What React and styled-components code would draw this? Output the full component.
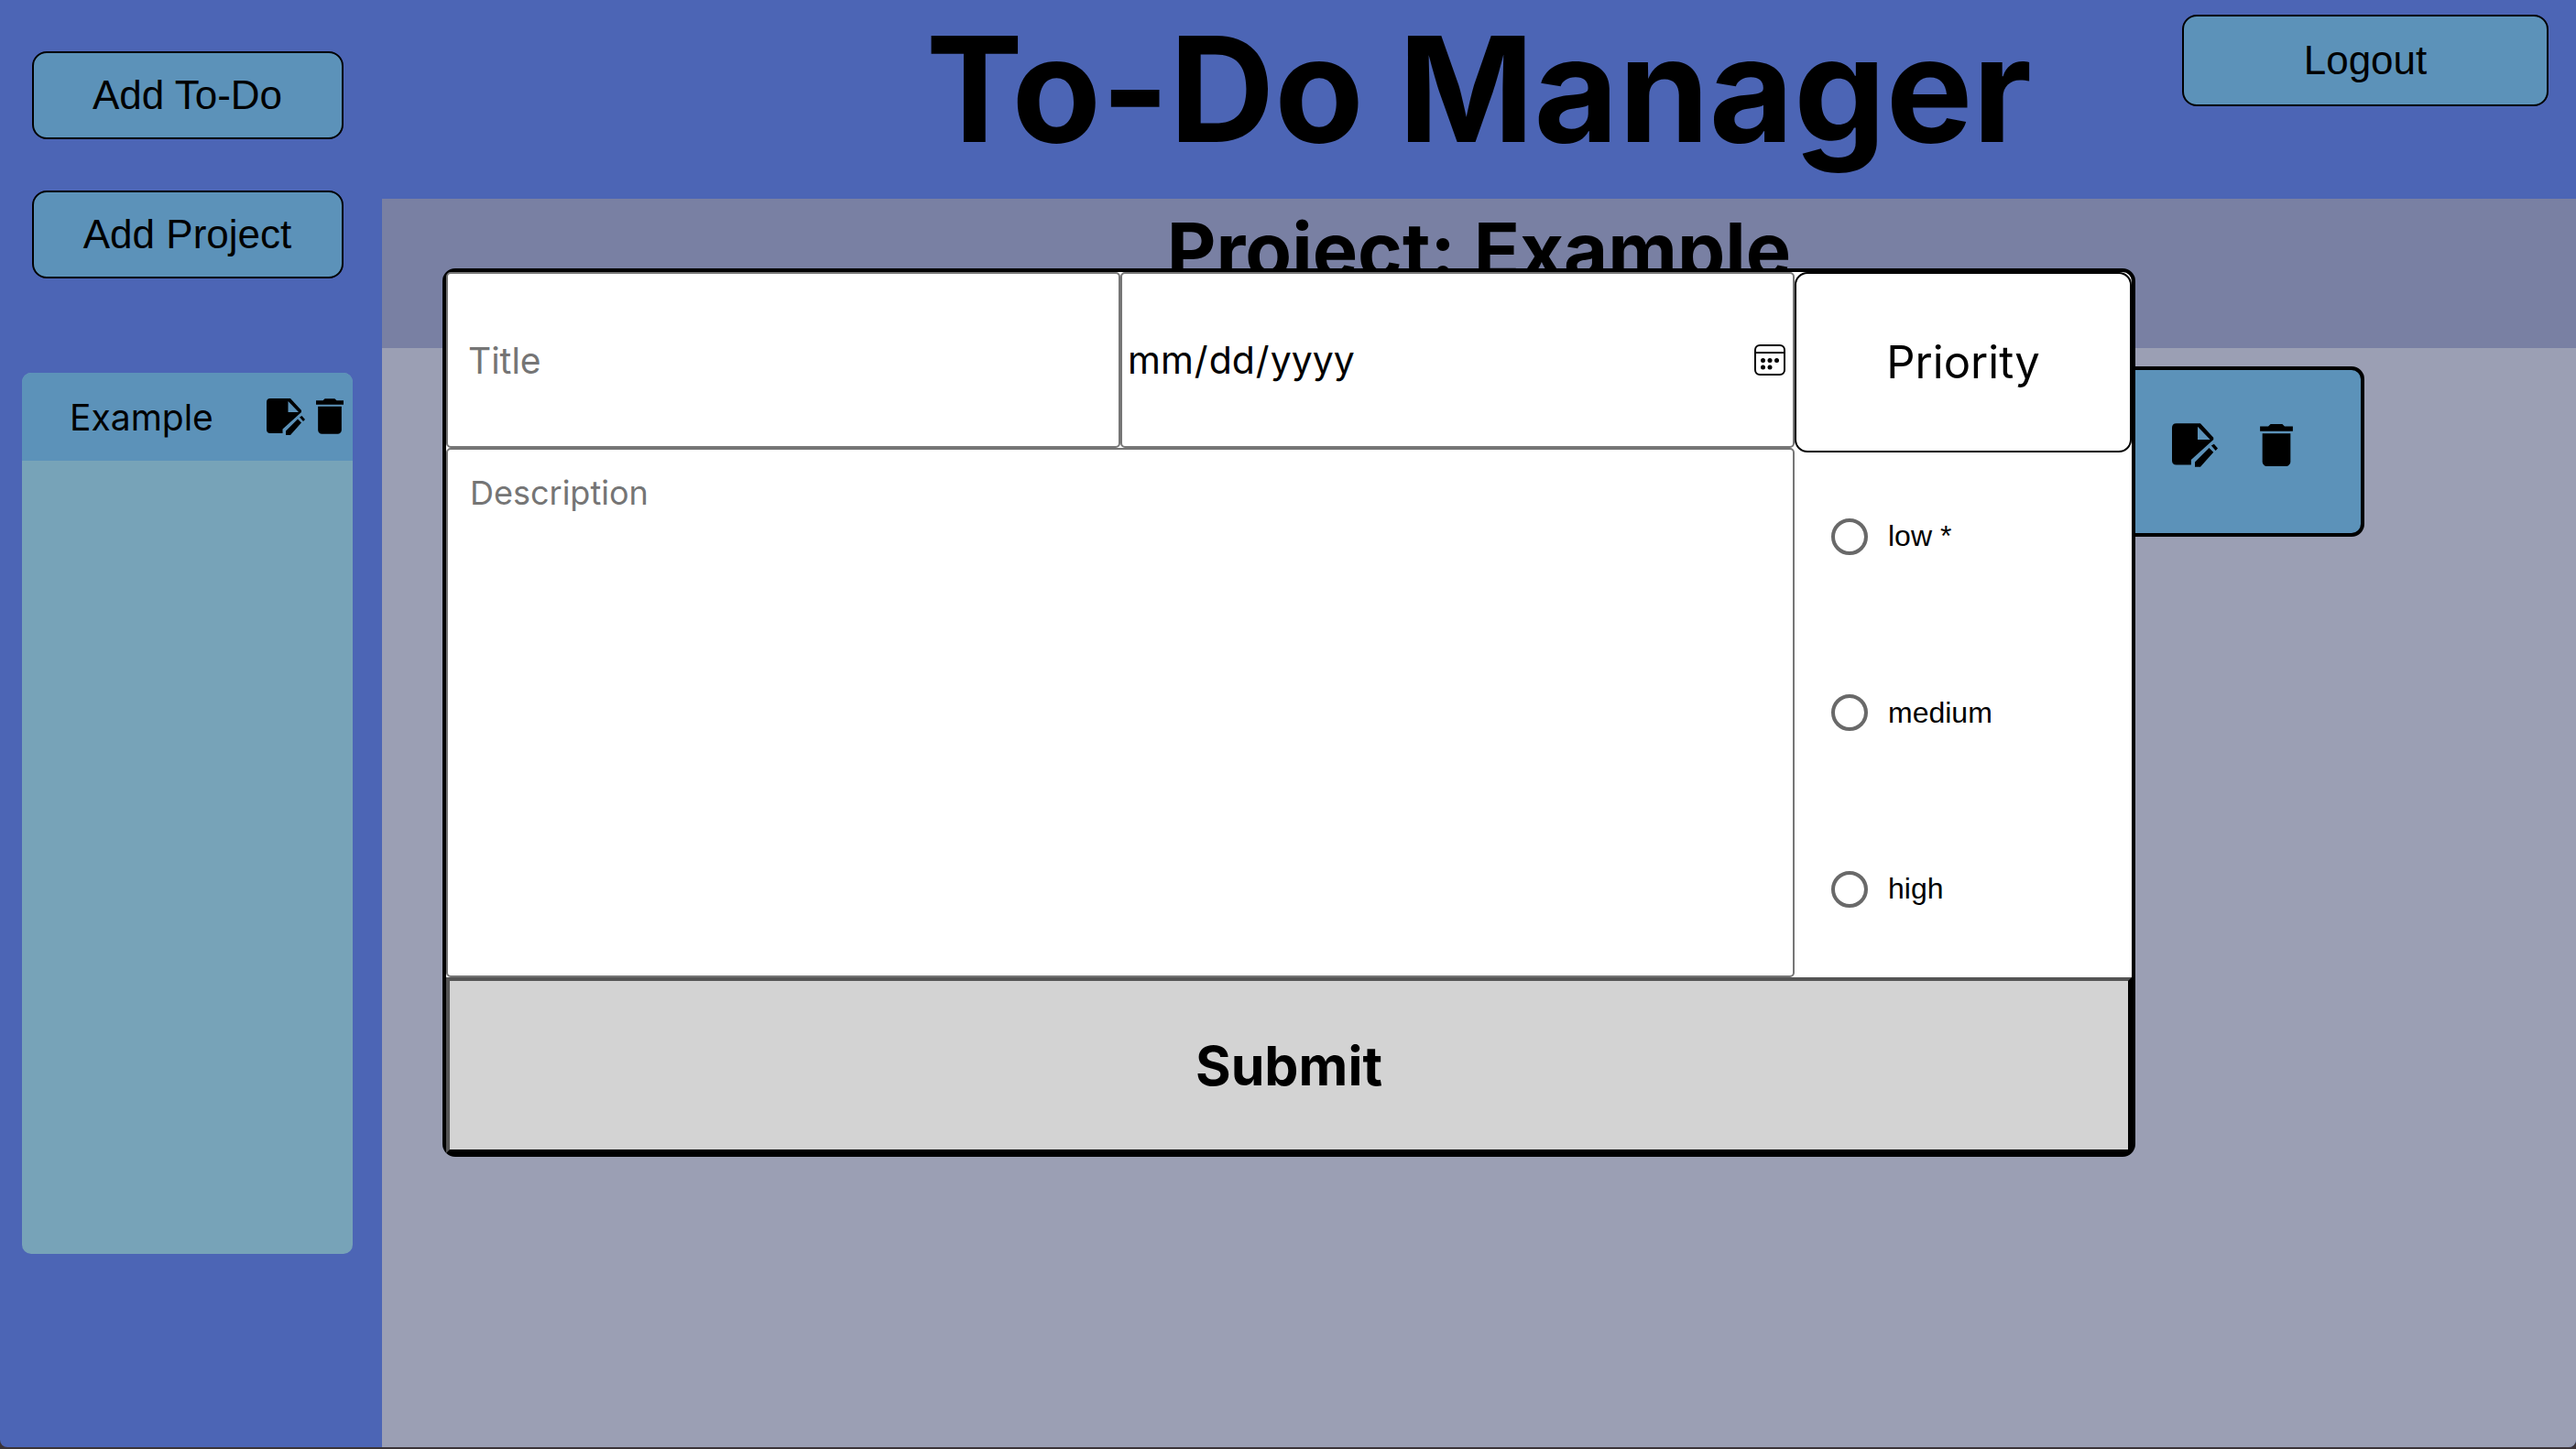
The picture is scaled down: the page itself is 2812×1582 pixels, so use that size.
import React from "react";
import styled, { createGlobalStyle } from "styled-components";

const sans = `Inter, "Open Sans", "Liberation Sans", sans-serif`;
const arial = `"Liberation Sans", Arial, sans-serif`;

const GlobalStyle = createGlobalStyle`
  *, *::before, *::after { box-sizing: border-box; }
  body { margin: 0; background: #3a3337; font-family: ${sans}; color: #000; }
  h1, h2, ul, fieldset { margin: 0; padding: 0; }
`;

const Page = styled.div`
  position: relative;
  display: grid;
  grid-template-columns: 417px 1fr;
  grid-template-rows: 217px 1fr;
  height: calc(100vh - 2px);
  background: #4c65b5;
  border-radius: 0 0 8px 8px;
  overflow: hidden;
`;

const Sidebar = styled.aside`
  grid-row: 1 / 3;
  display: flex;
  flex-direction: column;
  align-items: center;
  gap: 56px;
  padding: 56px 32px 0 24px;
`;

const Button = styled.button`
  width: ${(p) => p.$width}px;
  height: ${(p) => p.$height}px;
  padding: 0;
  border: 2px solid #000;
  border-radius: 16px;
  background: #5c92b9;
  color: #000;
  font: 44px ${arial};
`;

const ProjectList = styled.ul`
  align-self: stretch;
  height: 962px;
  margin-top: 47px;
  border-radius: 10px;
  background: #77a3b8;
  list-style: none;
  overflow: hidden;
`;

const ProjectRow = styled.li`
  display: flex;
  align-items: center;
  height: 96px;
  padding: 0 10px 0 52px;
  background: #5c92b9;
  font-size: 39px;
`;

const ProjectName = styled.span`
  flex: 1;
`;

const IconButton = styled.button`
  display: flex;
  padding: 0;
  border: 0;
  background: none;
  color: #000;
`;

const RowIcons = styled.div`
  display: flex;
  gap: 12px;
`;

const Header = styled.header`
  display: grid;
  grid-template-columns: 1fr;
`;

const Title = styled.h1`
  grid-area: 1 / 1;
  text-align: center;
  font-size: 159px;
  line-height: 194px;
`;

const Account = styled.div`
  grid-area: 1 / 1;
  justify-self: end;
  padding: 16px 30px 0 0;
`;

const Main = styled.main`
  background: #9b9fb4;
`;

const ProjectTitle = styled.h2`
  height: 163px;
  background: #7980a3;
  text-align: center;
  font-size: 83px;
  line-height: 112px;
`;

const TodoCard = styled.article`
  display: flex;
  align-items: center;
  justify-content: flex-end;
  gap: 46px;
  height: 186px;
  margin: 20px 231px 0;
  padding: 0 74px 14px 0;
  border: 4px solid #000;
  border-radius: 14px;
  background: #5c92b9;
`;

const Overlay = styled.div`
  position: absolute;
  inset: 0;
  padding: 293px 481px 0 483px;
`;

const TodoForm = styled.form`
  display: grid;
  grid-template-columns: 2fr 2fr 1fr;
  grid-template-rows: 192px 578px 192px;
  border: 4px solid #000;
  border-radius: 14px;
  background: #fff;
`;

const Field = styled.input`
  min-width: 0;
  width: 100%;
  height: 100%;
  border: 2px solid #767676;
  border-radius: 5px;
  background: #fff;
  padding: 0 22px;
  color: #000;
  font: 39px ${sans};
  &::placeholder { color: #757575; opacity: 1; }
`;

const DateBox = styled.div`
  display: grid;
  align-items: center;
`;

const DateField = styled(Field)`
  grid-area: 1 / 1;
  padding: 0 5px;
  font-size: 41px;
  &::-webkit-calendar-picker-indicator { opacity: 0; }
`;

const CalendarIcon = styled.svg`
  grid-area: 1 / 1;
  justify-self: end;
  margin-right: 10px;
  pointer-events: none;
`;

const Description = styled.textarea`
  grid-column: 1 / 3;
  border: 2px solid #767676;
  border-radius: 5px;
  background: #fff;
  padding: 25px 24px;
  resize: none;
  font: 36px ${sans};
  &::placeholder { color: #757575; opacity: 1; }
`;

const PriorityGroup = styled.fieldset`
  grid-area: 1 / 3 / 3 / 4;
  display: grid;
  grid-template-rows: repeat(4, 1fr);
  min-width: 0;
  border: 0;
`;

const PriorityHeading = styled.div`
  display: flex;
  align-items: center;
  justify-content: center;
  margin-bottom: -4px;
  border: 2px solid #000;
  border-radius: 14px;
  font-size: 49px;
`;

const Option = styled.label`
  display: flex;
  align-items: center;
  gap: 22px;
  padding-left: 40px;
  font: 32px ${arial};
`;

const Radio = styled.input`
  appearance: none;
  width: 40px;
  height: 40px;
  margin: 0;
  border: 4px solid #696969;
  border-radius: 50%;
  background: #fff;
  &:checked { background: #000; background-clip: content-box; padding: 6px; }
`;

const Submit = styled.button`
  grid-column: 1 / -1;
  border: 4px solid;
  border-color: #555 #000 #000 #555;
  background: #d3d3d3;
  color: #000;
  font: bold 59px ${sans};
`;

function EditIcon({ width }) {
  return (
    <svg width={width} height={Math.round((width * 20) / 21)} viewBox="0 0 42 40" fill="currentColor" aria-hidden="true">
      <path fillRule="evenodd" d="M4 0H26L38 13V15L17.500 33.500V38H4Q0 38 0 34V4Q0 0 4 0ZM23.500 3V15H35Z" />
      <path d="M21 35.500L34 22.500L38 26.500L26 40H21ZM36 20.500L38.500 19L42 23L40 25Z" />
    </svg>
  );
}

function TrashIcon({ width }) {
  return (
    <svg width={width} height={Math.round((width * 18) / 14)} viewBox="5 3 14 18" fill="currentColor" aria-hidden="true">
      <path d="M6 19c0 1.100.9 2 2 2h8c1.100 0 2-.9 2-2V7H6v12zM19 4h-3.500l-1-1h-5l-1 1H5v2h14V4z" />
    </svg>
  );
}

export default function App() {
  return (
    <>
      <GlobalStyle />
      <Page>
        <Sidebar>
          <Button $width={340} $height={96}>Add To-Do</Button>
          <Button $width={340} $height={96}>Add Project</Button>
          <ProjectList>
            <ProjectRow>
              <ProjectName>Example</ProjectName>
              <RowIcons>
                <IconButton aria-label="Edit project"><EditIcon width={42} /></IconButton>
                <IconButton aria-label="Delete project"><TrashIcon width={30} /></IconButton>
              </RowIcons>
            </ProjectRow>
          </ProjectList>
        </Sidebar>
        <Header>
          <Title>To-Do Manager</Title>
          <Account>
            <Button $width={400} $height={100}>Logout</Button>
          </Account>
        </Header>
        <Main>
          <ProjectTitle>Project: Example</ProjectTitle>
          <TodoCard>
            <IconButton aria-label="Edit to-do"><EditIcon width={50} /></IconButton>
            <IconButton aria-label="Delete to-do"><TrashIcon width={36} /></IconButton>
          </TodoCard>
        </Main>
        <Overlay>
          <TodoForm>
            <Field type="text" placeholder="Title" aria-label="Title" />
            <DateBox>
              <DateField type="date" aria-label="Due date" />
              <CalendarIcon width="34" height="34" viewBox="0 0 34 34" fill="none" stroke="#000" strokeWidth="2" aria-hidden="true">
                <rect x="1" y="1" width="32" height="32" rx="5" />
                <path d="M1 9H33" />
                <g fill="#000" stroke="none">
                  <circle cx="9.500" cy="17.500" r="2.500" />
                  <circle cx="17" cy="17.500" r="2.500" />
                  <circle cx="24.500" cy="17.500" r="2.500" />
                  <circle cx="9.500" cy="25" r="2.500" />
                  <circle cx="17" cy="25" r="2.500" />
                </g>
              </CalendarIcon>
            </DateBox>
            <PriorityGroup aria-label="Priority">
              <PriorityHeading>Priority</PriorityHeading>
              <Option><Radio type="radio" name="priority" value="low" />low *</Option>
              <Option><Radio type="radio" name="priority" value="medium" />medium</Option>
              <Option><Radio type="radio" name="priority" value="high" />high</Option>
            </PriorityGroup>
            <Description placeholder="Description" aria-label="Description" />
            <Submit type="submit">Submit</Submit>
          </TodoForm>
        </Overlay>
      </Page>
    </>
  );
}
